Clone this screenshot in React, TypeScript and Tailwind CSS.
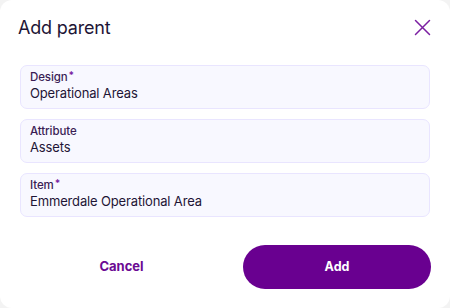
import React from 'react'

const fields = [
  { label: 'Design', required: true, value: 'Operational Areas' },
  { label: 'Attribute', required: false, value: 'Assets' },
  { label: 'Item', required: true, value: 'Emmerdale Operational Area' },
]

const App: React.FC = () => {
  return (
    <div
      className="w-[450px] h-[308px] bg-[#f3f3f3]"
      style={{ fontFamily: 'Inter, "Noto Sans", sans-serif' }}
    >
      <div className="w-full h-full bg-white rounded-[12px] flex flex-col">
        <div className="flex items-center justify-between pl-[18px] pr-[19px] pt-[3px] h-[52px]">
          <h2 className="text-[18px] text-[#1e1536] leading-none tracking-[-0.2px]">Add parent</h2>
          <button className="text-[#7b1fa2]">
            <svg width="17" height="17" viewBox="0 0 17 17" fill="none" stroke="currentColor" strokeWidth="1.5" strokeLinecap="round">
              <path d="M1.5 1.5L15.5 15.5M15.5 1.5L1.5 15.5" />
            </svg>
          </button>
        </div>

        <div className="flex flex-col gap-[10px] px-[20px] pt-[13px]">
          {fields.map(({ label, required, value }) => (
            <div
              key={label}
              className="h-[44px] rounded-[7px] border border-[#e9e5ff] bg-[#f8f8ff] px-[9px] pt-[4px]"
            >
              <div className="text-[11.5px] leading-[15px] font-medium text-[#3a1d55] tracking-[-0.1px] flex">
                {label}
                {required && <span className="text-[#7b1fa2] text-[10px] leading-[11px] font-bold ml-[1px]">*</span>}
              </div>
              <div className="text-[13px] leading-[17px] text-[#1e1536] tracking-[-0.15px]">{value}</div>
            </div>
          ))}
        </div>

        <div className="flex items-center pr-[19px] pt-[28px]">
          <button className="flex-1 h-[44px] text-[13px] font-bold text-[#6b0a93]">Cancel</button>
          <button className="w-[188px] h-[44px] rounded-full bg-[#690090] text-white text-[12.5px] font-bold">
            Add
          </button>
        </div>
      </div>
    </div>
  )
}

export default App
